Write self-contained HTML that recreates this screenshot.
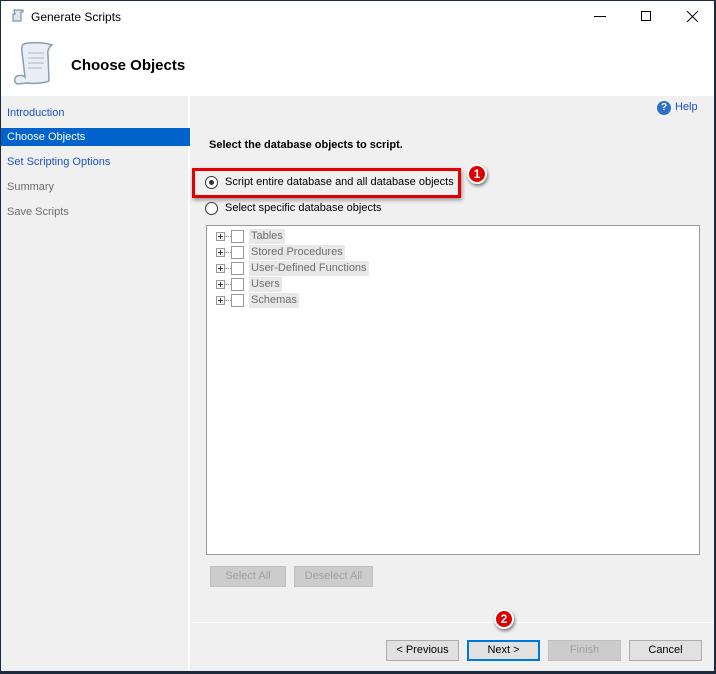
<!DOCTYPE html>
<html><head><style>
*{box-sizing:border-box;margin:0;padding:0}
body{width:716px;height:674px;background:#1f2a3c;font-family:"Liberation Sans",sans-serif;font-size:11px;position:relative;overflow:hidden}
.win{position:absolute;left:1px;top:1px;width:713px;height:670px;background:#f0f0f0}
.abs{position:absolute}
.hdr{left:0;top:0;width:713px;height:95px;background:#fff}
.nav{left:0;top:95px;width:189px;height:575px;background:#f0f0f0;border-right:2px solid #fff}
.nav div{position:absolute;left:0;width:189px;height:18px;line-height:18px;padding-left:6px;color:#1c52c4}
.btn{position:absolute;top:639px;height:21px;width:74px;border:1px solid #adadad;background:#e1e1e1;text-align:center;line-height:19px;color:#000}
.dis{color:#a0a0a0;background:#cccccc;border-color:#bfbfbf}
.tree div{position:absolute;left:9px;height:15px;line-height:15px;color:#6d6d6d}
.tree .pl{position:absolute;left:0;top:3px;width:9px;height:9px;border:1px solid #999;background:#fff}
.tree .pl:before{content:"";position:absolute;left:1px;top:3px;width:5px;height:1px;background:#333}
.tree .pl:after{content:"";position:absolute;left:3px;top:1px;width:1px;height:5px;background:#333}
.tree .dt{position:absolute;left:9px;top:7px;width:6px;border-top:1px dotted #999}
.tree .cb{position:absolute;left:15px;top:1px;width:13px;height:13px;border:1px solid #999;background:#fff}
.tree .lb{position:absolute;left:33px;top:0;background:#e8e8e8;padding:0 2px;white-space:nowrap}
.badge{position:absolute;width:20px;height:20px;border-radius:50%;background:#d00;border:2px solid #fff;box-shadow:1px 2px 3px rgba(0,0,0,.5);color:#fff;font-weight:bold;font-size:12px;text-align:center;line-height:16px}
</style></head><body>
<div class="win">
<div class="abs hdr"></div>
<svg class="abs" style="left:10px;top:8px" width="14" height="14" viewBox="0 0 14 14"><path d="M3 1h9v2H10v9H2V5h2z" fill="#dde6ef" stroke="#6b7f93"/></svg>
<div class="abs" style="left:30px;top:9px;font-size:12px">Generate Scripts</div>
<div class="abs" style="left:593px;top:15px;width:12px;height:1px;background:#000"></div>
<div class="abs" style="left:640px;top:10px;width:10px;height:10px;border:1px solid #000"></div>
<svg class="abs" style="left:686px;top:10px" width="11" height="11"><path d="M0 0L11 11M11 0L0 11" stroke="#000"/></svg>
<svg class="abs" style="left:11px;top:40px" width="42" height="46" viewBox="0 0 42 46"><path d="M12 3c6-2 20-2 28 1-3 2-5 6-4 10l1 26c-4 2-16 3-22 2l-10 1c-3-2-3-6 0-8 3-1 6-1 8 1l-3-25c-1-4 0-7 2-8z" fill="#e8eef5" stroke="#8a9db3" stroke-width="1.5"/><path d="M16 12h16M16 17h16M16 22h16M16 27h14" stroke="#aab8c7"/></svg>
<div class="abs" style="left:70px;top:56px;font-size:15px;font-weight:bold">Choose Objects</div>
<div class="abs nav">
<div style="top:8px">Introduction</div>
<div style="top:32px;background:#0063cc;color:#fff">Choose Objects</div>
<div style="top:57px">Set Scripting Options</div>
<div style="top:82px;color:#6d6d6d">Summary</div>
<div style="top:107px;color:#6d6d6d">Save Scripts</div>
</div>
<div class="abs" style="left:656px;top:100px;width:14px;height:14px;border-radius:50%;background:#2f6fc8;color:#fff;font-size:10px;font-weight:bold;text-align:center;line-height:14px">?</div>
<div class="abs" style="left:674px;top:100px;color:#1c52c4">Help</div>
<div class="abs" style="left:208px;top:138px;font-weight:bold;font-size:11px">Select the database objects to script.</div>
<div class="abs" style="left:191px;top:167px;width:269px;height:30px;border:3px solid #e00000;box-shadow:1px 2px 4px rgba(0,0,0,.4)"></div>
<div class="abs" style="left:204px;top:175px;width:13px;height:13px;border-radius:50%;border:1px solid #333;background:#fff"></div>
<div class="abs" style="left:208px;top:179px;width:5px;height:5px;border-radius:50%;background:#333"></div>
<div class="abs" style="left:224px;top:175px">Script entire database and all database objects</div>
<div class="abs" style="left:204px;top:201px;width:13px;height:13px;border-radius:50%;border:1px solid #333;background:#fff"></div>
<div class="abs" style="left:224px;top:201px">Select specific database objects</div>
<div class="badge" style="left:466px;top:163px">1</div>
<div class="abs tree" style="left:205px;top:224px;width:494px;height:330px;background:#fff;border:1px solid #999">
<div style="top:3px"><span class="pl"></span><span class="dt"></span><span class="cb"></span><span class="lb">Tables</span></div>
<div style="top:19px"><span class="pl"></span><span class="dt"></span><span class="cb"></span><span class="lb">Stored Procedures</span></div>
<div style="top:35px"><span class="pl"></span><span class="dt"></span><span class="cb"></span><span class="lb">User-Defined Functions</span></div>
<div style="top:51px"><span class="pl"></span><span class="dt"></span><span class="cb"></span><span class="lb">Users</span></div>
<div style="top:67px"><span class="pl"></span><span class="dt"></span><span class="cb"></span><span class="lb">Schemas</span></div>
</div>
<div class="btn dis" style="left:209px;top:565px;width:76px">Select All</div>
<div class="btn dis" style="left:293px;top:565px;width:79px">Deselect All</div>
<div class="abs" style="left:191px;top:621px;width:522px;height:1px;background:#fff"></div>
<div class="badge" style="left:493px;top:608px">2</div>
<div class="btn" style="left:385px;width:73px">&lt; Previous</div>
<div class="btn" style="left:466px;width:73px;border:2px solid #0078d7;line-height:17px">Next &gt;</div>
<div class="btn dis" style="left:547px;width:73px">Finish</div>
<div class="btn" style="left:628px;width:73px">Cancel</div>
</div>
</body></html>
